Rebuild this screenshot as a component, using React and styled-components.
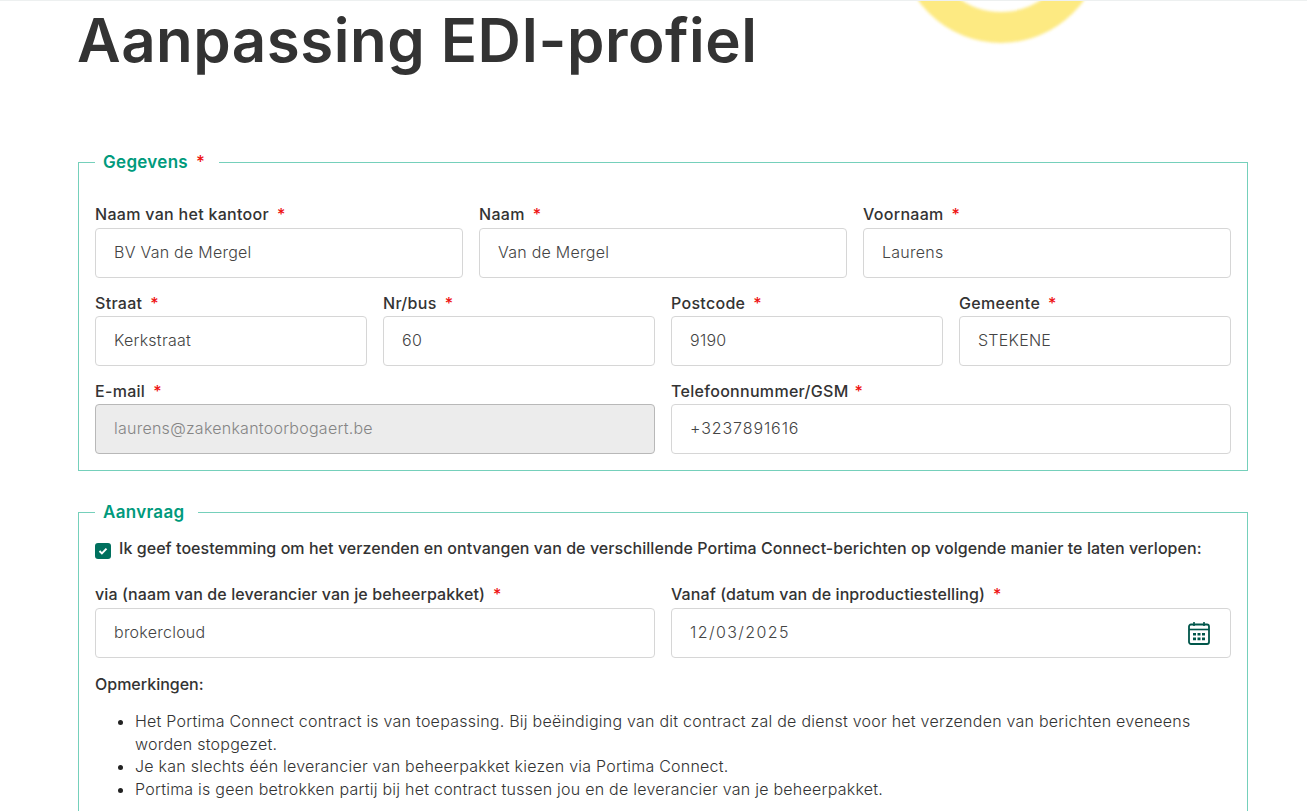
import React from 'react'
import styled, { createGlobalStyle } from 'styled-components'

const Global = createGlobalStyle`
  html, body { margin: 0; padding: 0; background: #fff; height: 811px; overflow: hidden; }
  body { font-family: Inter, "Noto Sans", sans-serif; color: #333; }
  * { box-sizing: border-box; }
`

const Page = styled.div`
  position: relative;
  width: 1307px;
  height: 811px;
  overflow: hidden;
  border-top: 1px solid #edf0f0;
  padding: 0 59px 0 78px;
`

const Blob = styled.div`
  position: absolute;
  left: 899px;
  top: -162px;
  width: 204px;
  height: 204px;
  border-radius: 50%;
  border: 31px solid #fdea82;
  filter: blur(1.5px);
`

const Title = styled.h1`
  position: relative;
  margin: 0 0 79px -1px;
  height: 72px;
  font-size: 60px;
  line-height: 78px;
  font-weight: 600;
  letter-spacing: 0.5px;
  color: #333;
`

const Box = styled.fieldset`
  margin: 0 0 ${p => p.$gap || 0}px;
  padding: 0 16px 16px;
  border: 1px solid #75d0bb;
  min-width: 0;
`

const Legend = styled.legend`
  margin-left: 0;
  padding: 0 14px 0 8px;
  font-size: 17px;
  line-height: 20px;
  font-weight: 600;
  letter-spacing: 0.3px;
  color: #009a7c;
`

const Star = styled.span`
  color: #ee1111;
  margin-left: ${p => p.$gap || 8}px;
  font-weight: 500;
`

const Row = styled.div`
  display: grid;
  grid-template-columns: repeat(${p => p.$cols}, 1fr);
  column-gap: 16px;
  margin-top: ${p => p.$top || 15}px;
`

const Field = styled.div`
  display: flex;
  flex-direction: column;
  position: relative;
`

const Label = styled.label`
  height: ${p => (p.$tall ? 24 : 23)}px;
  font-size: 16px;
  line-height: 20px;
  font-weight: 500;
  letter-spacing: ${p => (p.$tight ? 0.1 : 0.3)}px;
  color: #333;
  white-space: nowrap;
`

const Input = styled.div`
  display: flex;
  align-items: center;
  justify-content: space-between;
  height: 50px;
  padding: 0 20px 2px 18px;
  border: 1px solid ${p => (p.$disabled ? '#b8b8b8' : '#d6d6d6')};
  border-radius: 4px;
  background: ${p => (p.$disabled ? '#ececec' : '#fff')};
  color: ${p => (p.$disabled ? '#858585' : '#444')};
  font-size: 16px;
  font-weight: 300;
  letter-spacing: ${p => p.$track || 0.25}px;

  svg { margin-top: 2px; }
`

const Consent = styled.div`
  display: flex;
  align-items: center;
  gap: 8px;
  margin-top: 15px;
  font-size: 16px;
  line-height: 22px;
  font-weight: 500;
  white-space: nowrap;
  letter-spacing: 0.055px;
`

const Check = styled.span`
  display: flex;
  align-items: center;
  justify-content: center;
  width: 16px;
  height: 16px;
  margin-top: 5px;
  border-radius: 3px;
  background: #00705e;
`

const Note = styled.div`
  margin-top: 15px;
  font-size: 16px;
  line-height: 22px;
  font-weight: 500;
`

const List = styled.ul`
  margin: 15px 0 0;
  padding-left: 40px;
  font-size: 16px;
  line-height: 22.5px;
  font-weight: 300;
  letter-spacing: 0.24px;
  color: #333;
  li::marker { color: #222; }
`

const CalendarIcon = () => (
  <svg width="22" height="24" viewBox="0 0 22 24" fill="none">
    <path d="M6 1v4M16 1v4" stroke="#00564a" strokeWidth="1.6" />
    <rect x="1" y="3.5" width="20" height="19.5" rx="2" stroke="#00564a" strokeWidth="1.8" />
    <path d="M1 8.5h20" stroke="#00564a" strokeWidth="1.6" />
    <path d="M5 12h3v2.6H5zM9.5 12h3v2.6h-3zM14 12h3v2.6h-3zM5 16.6h3v2.6H5zM9.5 16.6h3v2.6h-3zM14 16.6h3v2.6h-3z" fill="#00564a" />
  </svg>
)

const TextField = ({ label, value, disabled, gap, tight, tall, track, children }) => (
  <Field>
    <Label $tight={tight} $tall={tall}>{label}<Star $gap={gap}>*</Star></Label>
    <Input $disabled={disabled} $track={track}>{value}{children}</Input>
  </Field>
)

export default function App() {
  return (
    <Page>
      <Global />
      <Blob />
      <Title>Aanpassing EDI-profiel</Title>

      <Box $gap={31}>
        <Legend>Gegevens<Star>*</Star></Legend>
        <Row $cols={3} $top={32}>
          <TextField label="Naam van het kantoor" value="BV Van de Mergel" tall />
          <TextField label="Naam" value="Van de Mergel" tall />
          <TextField label="Voornaam" value="Laurens" tall />
        </Row>
        <Row $cols={4}>
          <TextField label="Straat" value="Kerkstraat" />
          <TextField label="Nr/bus" value="60" />
          <TextField label="Postcode" value="9190" />
          <TextField label="Gemeente" value="STEKENE" />
        </Row>
        <Row $cols={2}>
          <TextField label="E-mail" value="laurens@zakenkantoorbogaert.be" disabled />
          <TextField label="Telefoonnummer/GSM" value="+3237891616" gap={6} track={0.9} />
        </Row>
      </Box>

      <Box>
        <Legend>Aanvraag</Legend>
        <Consent>
          <Check>
            <svg width="10" height="8" viewBox="0 0 10 8" fill="none">
              <path d="M1.5 4l2.4 2.4L8.5 1.6" stroke="#fff" strokeWidth="2" />
            </svg>
          </Check>
          Ik geef toestemming om het verzenden en ontvangen van de verschillende Portima Connect-berichten op volgende manier te laten verlopen:
        </Consent>
        <Row $cols={2} $top={25}>
          <TextField label="via (naam van de leverancier van je beheerpakket)" value="brokercloud" tight tall />
          <TextField label="Vanaf (datum van de inproductiestelling)" value="12/03/2025" tight tall track={1.4}>
            <CalendarIcon />
          </TextField>
        </Row>
        <Note>Opmerkingen:</Note>
        <List>
          <li>Het Portima Connect contract is van toepassing. Bij beëindiging van dit contract zal de dienst voor het verzenden van berichten eveneens worden stopgezet.</li>
          <li>Je kan slechts één leverancier van beheerpakket kiezen via Portima Connect.</li>
          <li>Portima is geen betrokken partij bij het contract tussen jou en de leverancier van je beheerpakket.</li>
        </List>
      </Box>
    </Page>
  )
}
